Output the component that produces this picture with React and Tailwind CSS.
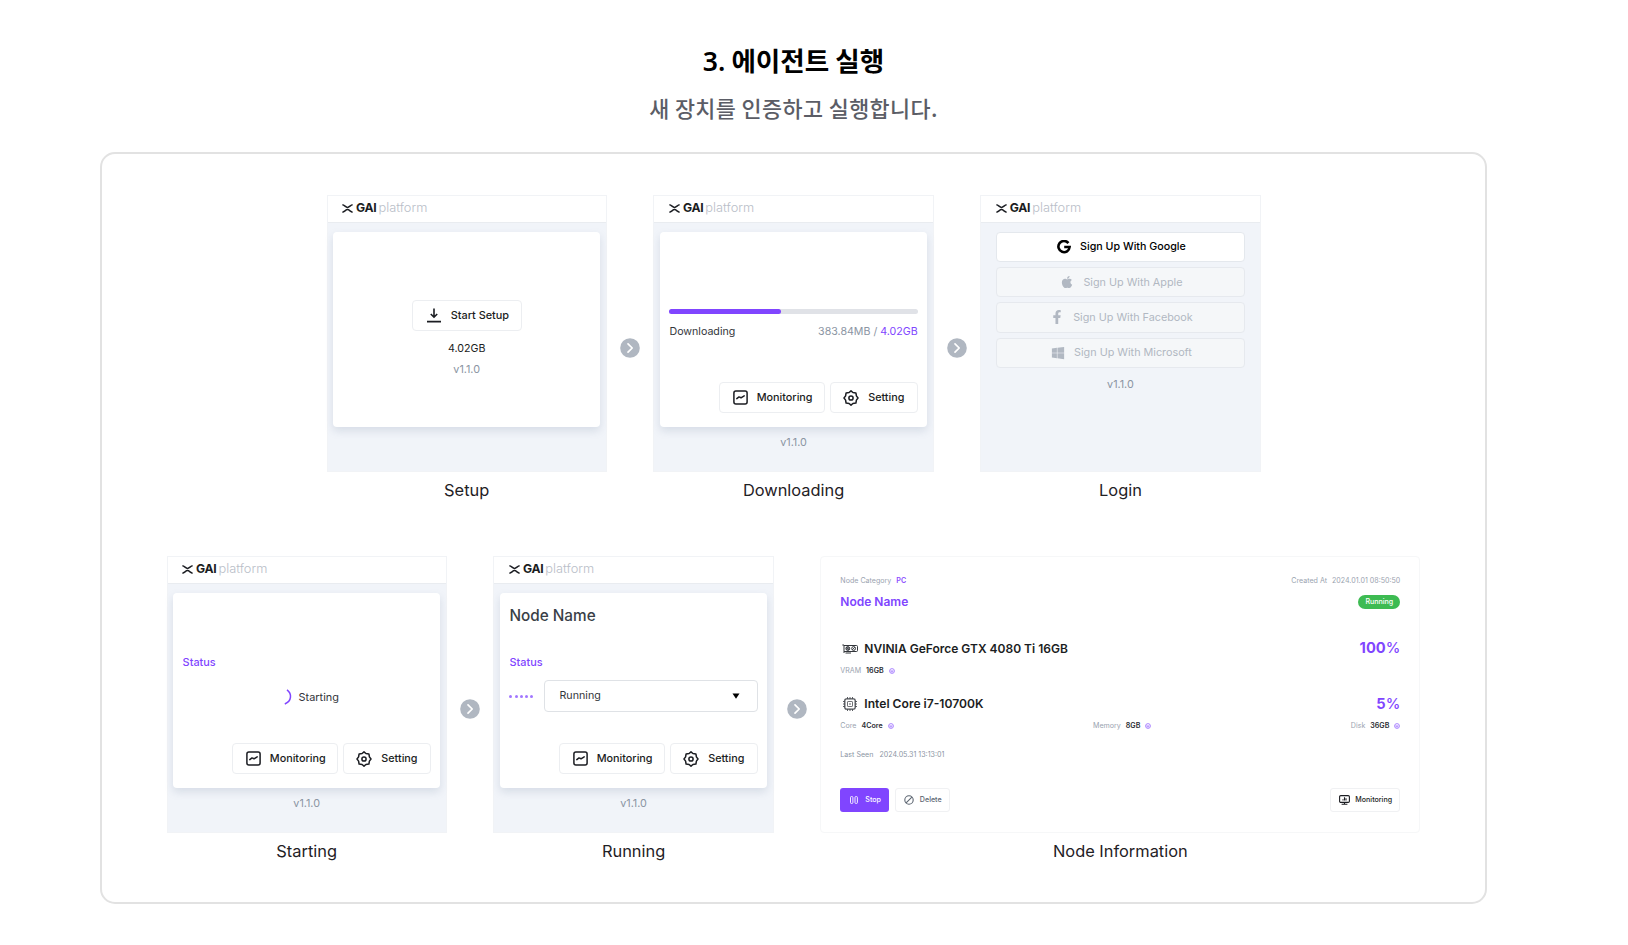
import React from "react";
import { FaApple, FaFacebookF, FaWindows } from "react-icons/fa";

const INK = "#1b1d22";

function Logo() {
  return (
    <div className="flex h-[27px] shrink-0 items-center border-b border-[#e9ecf0] bg-white pb-px pl-[14.5px] leading-none">
      <svg width="11" height="9" viewBox="0 0 11 9" fill="none" stroke={INK} strokeWidth="1.5" className="mr-[3px]">
        <path d="M0.4 0.8 C2.5 1 3.6 3.4 5.5 3.4 S8.5 1 10.6 0.8" />
        <path d="M0.4 8.2 C2.5 8 3.6 5.6 5.5 5.6 S8.5 8 10.6 8.2" />
      </svg>
      <span className="text-[12.2px] font-bold tracking-[-0.3px] text-[#1b1d22]">GAI</span>
      <span className="ml-[2px] text-[12.8px] font-light text-[#b9bec8]">platform</span>
    </div>
  );
}

function Panel({ title, children }) {
  return (
    <div className="flex w-[280.2px] flex-col items-center">
      <div className="flex h-[277px] w-full flex-col border border-[#f1f3f6] bg-[#f1f4f9]">
        <Logo />
        {children}
      </div>
      <Caption>{title}</Caption>
    </div>
  );
}

function Caption({ children }) {
  return <div className="mt-[8px] mb-px text-[16.4px] leading-[20px] whitespace-nowrap text-[#1f2125]">{children}</div>;
}

function Card({ children }) {
  return (
    <div className="mx-[5.5px] mt-[9px] flex h-[195px] shrink-0 flex-col rounded-[4px] bg-white px-[9.5px] shadow-[0_4px_8px_rgba(110,130,160,0.2)]">
      {children}
    </div>
  );
}

function Version({ children }) {
  return <div className="text-center text-[10.8px] leading-[14px] text-[#8b95a3]">{children}</div>;
}

function Arrow() {
  return (
    <div className="mt-[143px] flex w-[46.7px] justify-center">
      <svg width="20" height="20" viewBox="0 0 20 20" fill="none">
        <circle cx="10" cy="10" r="9.8" fill="#b0b7c1" />
        <path d="M8 5.8 L12.2 10 L8 14.2" stroke="#fff" strokeWidth="1.7" strokeLinecap="round" strokeLinejoin="round" />
      </svg>
    </div>
  );
}

function ChartIcon() {
  return (
    <svg width="15" height="15" viewBox="0 0 15 15" fill="none" stroke={INK} strokeWidth="1.5" strokeLinecap="round" strokeLinejoin="round">
      <rect x="0.9" y="0.9" width="13.2" height="13.2" rx="2" />
      <path d="M3.8 8.6 L6 6.9 L8 7.8 L11.2 5.8" />
    </svg>
  );
}

function GearIcon() {
  return (
    <svg width="16" height="16" viewBox="0 0 16 16" fill="none" stroke={INK} strokeWidth="1.5" strokeLinejoin="round">
      <path d="M8 0.9 L9.9 2.5 L12.9 2.9 L13.4 5.9 L15 8 L13.4 10.1 L12.9 13.1 L9.9 13.5 L8 15.1 L6.1 13.5 L3.1 13.1 L2.6 10.1 L1 8 L2.6 5.9 L3.1 2.9 L6.1 2.5 Z" />
      <circle cx="8" cy="8" r="2.1" />
    </svg>
  );
}

function Actions() {
  return (
    <div className="mt-auto mb-[14px] flex justify-end gap-[5px] text-[10.8px] font-medium leading-none text-[#1b1d22]">
      <div className="flex h-[31px] w-[106px] items-center rounded-[4px] border border-[#eceef1] pl-[13px]">
        <ChartIcon />
        <span className="ml-[9px] pt-px">Monitoring</span>
      </div>
      <div className="flex h-[31px] w-[88px] items-center rounded-[4px] border border-[#eceef1] pl-[12.5px]">
        <GearIcon />
        <span className="ml-[9px] pt-px">Setting</span>
      </div>
    </div>
  );
}

function GoogleIcon() {
  return (
    <svg width="14" height="14" viewBox="0 0 14 14" fill="none" stroke="#000" strokeWidth="2.6">
      <path d="M11.4 3.1 A5.6 5.6 0 1 0 12.6 7 H7.2" />
    </svg>
  );
}

function SignUp({ icon, children, active }) {
  return (
    <div
      className={
        active
          ? "flex h-[30.2px] items-center justify-center rounded-[4px] border border-[#e4e8ed] bg-white text-black"
          : "flex h-[30.2px] items-center justify-center rounded-[4px] border border-[#e6e9ee] bg-[#f5f7f9] text-[#b1b8c2]"
      }
    >
      <span className="mr-[9.5px] ml-[1.5px]">{icon}</span>
      <span className={active ? "pt-[1.5px] font-medium" : "pt-[1.5px] text-[10.8px]"}>{children}</span>
    </div>
  );
}

function Tick() {
  return (
    <svg width="6" height="6" viewBox="0 0 6 6" fill="none" stroke="#a277ff" strokeWidth="0.9" className="ml-[5px]">
      <circle cx="3" cy="3" r="2.4" />
      <path d="M1.4 3H4.4M3 3V4.6" />
    </svg>
  );
}

function Spec({ label, value }) {
  return (
    <div className="flex items-center">
      <span className="text-[#9aa3af]">{label}</span>
      <span className="ml-[5px] font-semibold text-[#2a2d33]">{value}</span>
      <Tick />
    </div>
  );
}

function GpuIcon() {
  return (
    <svg width="16" height="10" viewBox="0 0 16 10" fill="none" stroke="#33363b" strokeWidth="1">
      <path d="M0.3 1H2V9M2 1.5H14.5Q15.5 1.5 15.5 2.5V6.5Q15.5 7.5 14.5 7.5H2M3.5 9H9" />
      <circle cx="5.8" cy="4.5" r="1.9" fill="#8a8d92" />
      <circle cx="11.6" cy="4.5" r="1.9" />
      <path d="M4.5 3.2L7.1 5.8M10.3 5.8L12.9 3.2" />
    </svg>
  );
}

function CpuIcon() {
  return (
    <svg width="14" height="14" viewBox="0 0 14 14" fill="none" stroke="#4a4d52" strokeWidth="1.3">
      <rect x="1.8" y="1.8" width="10.4" height="10.4" rx="1.6" />
      <rect x="4.5" y="4.5" width="5" height="5" rx="0.6" strokeWidth="0.8" />
      <path d="M4.5 0V2M7 0V2M9.5 0V2M4.5 12V14M7 12V14M9.5 12V14M0 4.5H2M0 7H2M0 9.5H2M12 4.5H14M12 7H14M12 9.5H14M6 7H8" strokeWidth="0.9" />
    </svg>
  );
}

function NodeInfo() {
  return (
    <div className="flex w-[600px] flex-col items-center">
      <div className="flex h-[277px] w-full flex-col rounded-[4px] border border-[#f6f7f8] bg-white pr-[19px] pl-[19px] text-[7.1px] leading-none whitespace-nowrap">
        <div className="mt-[19px] flex h-[10px] items-center justify-between text-[#9aa3af]">
          <div className="flex">
            <span>Node Category</span>
            <span className="ml-[5px] font-semibold text-[#8b4dff]">PC</span>
          </div>
          <div className="flex">
            <span>Created At</span>
            <span className="ml-[5px]">2024.01.01 08:50:50</span>
          </div>
        </div>
        <div className="mt-[7.5px] flex h-[16px] items-center justify-between">
          <span className="text-[12px] font-semibold text-[#8045ff]">Node Name</span>
          <span className="flex h-[14px] w-[42px] items-center justify-center rounded-full bg-[#3dbb52] font-medium text-white">Running</span>
        </div>
        <div className="mt-[29.5px] flex h-[20px] items-center">
          <span className="ml-[2px] w-[22px]"><GpuIcon /></span>
          <span className="text-[12px] font-semibold text-[#1b1d22]">NVINIA GeForce GTX 4080 Ti 16GB</span>
          <span className="ml-auto pb-px text-[14.7px] font-bold text-[#8045ff]">100<span className="font-medium">%</span></span>
        </div>
        <div className="mt-[7px] flex h-[10px] items-center">
          <Spec label="VRAM" value="16GB" />
        </div>
        <div className="mt-[18px] flex h-[20px] items-center">
          <span className="ml-[3px] w-[21px]"><CpuIcon /></span>
          <span className="pt-px text-[12.1px] font-semibold text-[#1b1d22]">Intel Core i7-10700K</span>
          <span className="ml-auto text-[14.7px] font-bold text-[#8045ff]">5<span className="font-medium">%</span></span>
        </div>
        <div className="mt-[6.5px] flex h-[10px] items-center justify-between">
          <Spec label="Core" value="4Core" />
          <Spec label="Memory" value="8GB" />
          <Spec label="Disk" value="36GB" />
        </div>
        <div className="mt-[19px] flex h-[10px] items-center text-[#8b95a3]">
          <span>Last Seen</span>
          <span className="ml-[6px]">2024.05.31 13:13:01</span>
        </div>
        <div className="mt-[28px] flex h-[24px] font-medium">
          <div className="flex w-[49px] items-center rounded-[3px] bg-[#8045ff] pl-[10px] text-white">
            <svg width="8" height="8" viewBox="0 0 8 8" fill="none" stroke="#fff" strokeWidth="0.9" className="mr-[7px]">
              <rect x="0.5" y="0.6" width="2.4" height="6.8" rx="0.8" />
              <rect x="5" y="0.6" width="2.4" height="6.8" rx="0.8" />
            </svg>
            <span className="pt-px">Stop</span>
          </div>
          <div className="ml-[5.5px] flex w-[55px] items-center rounded-[3px] border border-[#f0f1f3] pl-[8px] text-[#5b6470]">
            <svg width="10" height="10" viewBox="0 0 10 10" fill="none" stroke="#5b6470" strokeWidth="1.1" className="mr-[6px]">
              <circle cx="5" cy="5" r="4.2" />
              <path d="M2.1 7.9L7.9 2.1" />
            </svg>
            <span className="pt-px">Delete</span>
          </div>
          <div className="ml-auto flex w-[70px] items-center rounded-[3px] border border-[#f0f1f3] pl-[8px] text-[#1b1d22]">
            <svg width="11" height="10" viewBox="0 0 11 10" fill="none" stroke="#1b1d22" strokeWidth="1.1" className="mr-[5px]">
              <rect x="0.6" y="0.6" width="9.8" height="6.8" rx="1.2" />
              <path d="M4 5.6V4.2M5.5 5.6V2.2M7 5.6V3.2M5.5 7.4V9.2M2.6 9.3H8.4" />
            </svg>
            <span className="pt-px">Monitoring</span>
          </div>
        </div>
      </div>
      <Caption>Node Information</Caption>
    </div>
  );
}

export default function App() {
  return (
    <div className="h-[945px] w-[1628px] overflow-hidden bg-white font-['Inter',sans-serif]">
      <div className="ml-[100px] flex w-[1387px] flex-col items-center">
        <h1 className="mt-[40px] h-[40px] text-[26.6px] leading-[40px] font-bold text-black font-['Noto_Sans_CJK_KR',sans-serif]">
          <span className="font-semibold font-['Noto_Sans',sans-serif]">3.</span> 에이전트 실행
        </h1>
        <p className="mt-[12px] h-[32px] text-[21.8px] leading-[32px] font-medium tracking-[0.4px] text-[#5b5d66] font-['Noto_Sans_CJK_KR',sans-serif]">새 장치를 인증하고 실행합니다.</p>
        <div className="mt-[28px] h-[752px] w-full rounded-[15px] border-2 border-[#e2e2e2]">
          <div className="mt-[41px] ml-[224.6px] flex">
            <Panel title="Setup">
              <Card>
                <div className="mt-[68px] flex h-[31px] w-[110px] shrink-0 items-center self-center rounded-[4px] border border-[#eceef1] pl-[14px] text-[10.9px] leading-none font-medium text-[#1b1d22]">
                  <svg width="14" height="15" viewBox="0 0 14 15" fill="none" stroke={INK} strokeWidth="1.6" className="mr-[10px]">
                    <path d="M0 13.6H14M7 0.5V9M3.8 6L7 9.2L10.2 6" />
                  </svg>
                  Start Setup
                </div>
                <div className="mt-[11px] text-center text-[10.7px] leading-[14px] text-[#1b1d22]">4.02GB</div>
                <div className="mt-[7px]"><Version>v1.1.0</Version></div>
              </Card>
            </Panel>
            <Arrow />
            <Panel title="Downloading">
              <Card>
                <div className="mt-[76.5px] h-[5px] shrink-0 rounded-full bg-[#e0e2e7]">
                  <div className="h-full w-[45%] rounded-full bg-[#8045ff]" />
                </div>
                <div className="mt-[11.5px] flex justify-between text-[10.65px] leading-[14px]">
                  <span className="text-[#33363b]">Downloading</span>
                  <span className="text-[#8b95a3]">383.84MB / <span className="text-[#8045ff]">4.02GB</span></span>
                </div>
                <Actions />
              </Card>
              <div className="mt-[9px]"><Version>v1.1.0</Version></div>
            </Panel>
            <Arrow />
            <Panel title="Login">
              <div className="mx-[15px] mt-[9px] flex flex-col gap-[5px] text-[10.7px] leading-none">
                <SignUp active icon={<GoogleIcon />}>Sign Up With Google</SignUp>
                <SignUp icon={<FaApple size={14} />}>Sign Up With Apple</SignUp>
                <SignUp icon={<FaFacebookF size={14} />}>Sign Up With Facebook</SignUp>
                <SignUp icon={<FaWindows size={14} />}>Sign Up With Microsoft</SignUp>
              </div>
              <div className="mt-[10px]"><Version>v1.1.0</Version></div>
            </Panel>
          </div>
          <div className="mt-[55px] ml-[64.6px] flex">
            <Panel title="Starting">
              <Card>
                <div className="mt-[62px] text-[10.9px] leading-[14px] font-medium text-[#8045ff]">Status</div>
                <div className="mt-[19.5px] flex items-center pl-[101px] text-[10.9px] leading-[14px] text-[#33363b]">
                  <svg width="8" height="16" viewBox="0 0 8 16" fill="none" stroke="#8045ff" strokeWidth="1.5" className="mr-[7px]">
                    <path d="M3 0.8C8 4.5 8 12 0.8 15" />
                  </svg>
                  Starting
                </div>
                <Actions />
              </Card>
              <div className="mt-[9px]"><Version>v1.1.0</Version></div>
            </Panel>
            <Arrow />
            <Panel title="Running">
              <Card>
                <div className="mt-[13px] text-[15.3px] leading-[20px] font-medium text-[#3a3f47]">Node Name</div>
                <div className="mt-[29px] text-[10.9px] leading-[14px] font-medium text-[#8045ff]">Status</div>
                <div className="mt-[11px] flex items-center">
                  <div className="flex w-[35px] gap-[2.2px]">
                    {[0, 1, 2, 3, 4].map((i) => (
                      <span key={i} className="size-[3px] rounded-full bg-[#a277ff]" />
                    ))}
                  </div>
                  <div className="flex h-[32px] flex-1 items-center justify-between rounded-[4px] border border-[#dfe2e6] pr-[17px] pl-[14px] text-[10.7px] leading-none text-[#33363b]">
                    <span className="pt-[1.5px]">Running</span>
                    <svg width="8" height="6" viewBox="0 0 8 6"><path d="M0.5 0.5H7.5L4 5.8Z" fill="#000" /></svg>
                  </div>
                </div>
                <Actions />
              </Card>
              <div className="mt-[9px]"><Version>v1.1.0</Version></div>
            </Panel>
            <Arrow />
            <NodeInfo />
          </div>
        </div>
      </div>
    </div>
  );
}
